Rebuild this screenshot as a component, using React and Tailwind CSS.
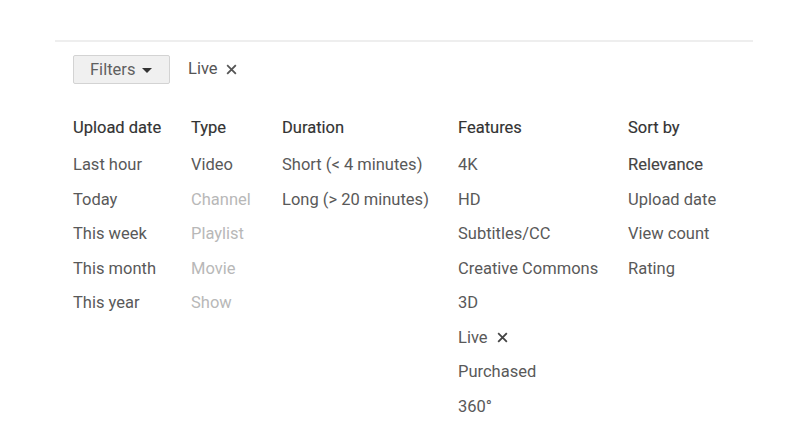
import { useState } from "react";

const columns = [
  {
    title: "Upload date",
    width: "w-[118px]",
    items: [
      { label: "Last hour" },
      { label: "Today" },
      { label: "This week" },
      { label: "This month" },
      { label: "This year" },
    ],
  },
  {
    title: "Type",
    width: "w-[91px]",
    items: [
      { label: "Video" },
      { label: "Channel", disabled: true },
      { label: "Playlist", disabled: true },
      { label: "Movie", disabled: true },
      { label: "Show", disabled: true },
    ],
  },
  {
    title: "Duration",
    width: "w-[176px]",
    items: [{ label: "Short (< 4 minutes)" }, { label: "Long (> 20 minutes)" }],
  },
  {
    title: "Features",
    width: "w-[170px]",
    items: [
      { label: "4K" },
      { label: "HD" },
      { label: "Subtitles/CC" },
      { label: "Creative Commons" },
      { label: "3D" },
      { label: "Live", active: true },
      { label: "Purchased" },
      { label: "360°" },
    ],
  },
  {
    title: "Sort by",
    width: "w-[120px]",
    items: [
      { label: "Relevance", selected: true },
      { label: "Upload date" },
      { label: "View count" },
      { label: "Rating" },
    ],
  },
];

function CloseX({ className = "" }) {
  return (
    <svg viewBox="0 0 12 12" className={className} aria-hidden="true">
      <path d="M2 2 L10 10 M10 2 L2 10" stroke="currentColor" strokeWidth="2" strokeLinecap="square" />
    </svg>
  );
}

export default function App() {
  const [open] = useState(true);

  return (
    <div
      className="min-h-[444px] w-full bg-white"
      style={{ fontFamily: "Roboto, 'Liberation Sans', sans-serif" }}
    >
      <div className="ml-[55px] w-[698px] pt-[40px]">
        {/* divider */}
        <div className="h-[2px] bg-[#eeeeee]" />

        {/* filter bar */}
        <div className="mt-[13px] flex items-center pl-[18px]">
          <button className="flex h-[29px] w-[97px] items-center rounded-[2px] border border-[#d3d3d3] bg-[#f0f0f0] pl-[16px] pt-[2px] text-[16.5px] text-[#606060]">
            Filters
            <span className="ml-[7px] h-0 w-0 border-x-[5px] border-t-[5px] border-x-transparent border-t-[#333]" />
          </button>
          <span className="ml-[18px] flex items-center text-[16.5px] text-[#555]">
            Live
            <CloseX className="ml-[8px] h-[11px] w-[11px] text-[#555]" />
          </span>
        </div>

        {/* filter columns */}
        {open && (
          <div className="mt-[27px] flex pl-[18px]">
            {columns.map((col) => (
              <div key={col.title} className={col.width}>
                <div className="mb-[2.5px] text-[16.5px] leading-[34.5px] text-[#333] [-webkit-text-stroke:0.15px_#333]">
                  {col.title}
                </div>
                {col.items.map((it) => (
                  <div
                    key={it.label}
                    className={
                      "flex items-center whitespace-nowrap text-[16.5px] leading-[34.5px] " +
                      (it.disabled
                        ? "text-[#b8b8b8]"
                        : it.selected
                        ? "text-[#444] [-webkit-text-stroke:0.15px_#444]"
                        : "text-[#595959]")
                    }
                  >
                    {it.label}
                    {it.active && <CloseX className="ml-[9px] h-[11px] w-[11px] text-[#444]" />}
                  </div>
                ))}
              </div>
            ))}
          </div>
        )}
      </div>
    </div>
  );
}
